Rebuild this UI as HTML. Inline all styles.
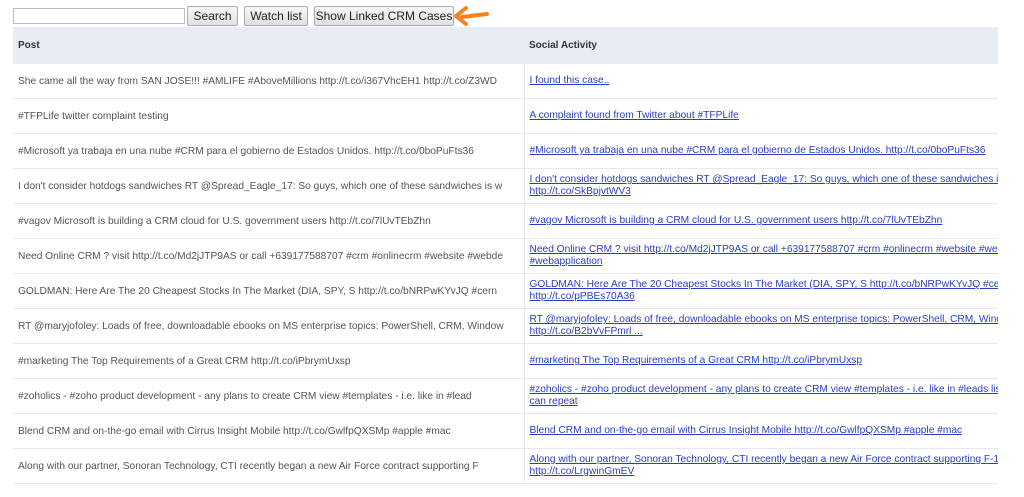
<!DOCTYPE html>
<html><head><style>
body{margin:0;background:#fff;font-family:"Liberation Sans",sans-serif;width:1024px;height:486px;overflow:hidden;position:relative}
.bar{position:absolute;top:6px;left:13px;height:20px}
input{position:absolute;left:0;top:2px;width:170px;height:14px;border:1px solid #bbb;padding:0;margin:0}
.btn{position:absolute;top:0;height:18px;border:1px solid #aaa;border-radius:2px;background:linear-gradient(#f8f8f8,#e0e0e0);font-size:12px;line-height:18px;text-align:center;color:#222}
.wrap{position:absolute;left:13px;top:27px;width:985px;height:470px;overflow:hidden}
table{border-collapse:collapse;table-layout:fixed;width:985px}
td,th{height:34px;border-bottom:1px solid #e4e9f2;padding:0 0 0 5px;font-size:10.2px;white-space:nowrap;overflow:hidden;vertical-align:middle;text-align:left}
th{background:#e8edf4;height:37px;font-weight:bold;color:#333;font-size:10px;border:none}
td:first-child{border-right:1px solid #e4e9f2;color:#555}
td a{color:#2a3ec4;text-decoration:underline;line-height:12px;display:block}
</style></head><body>
<div class="bar">
<input type="text">
<div class="btn" style="left:174px;width:49px">Search</div>
<div class="btn" style="left:231px;width:62px">Watch list</div>
<div class="btn" style="left:301px;width:138px">Show Linked CRM Cases</div>
</div>
<svg style="position:absolute;left:452px;top:5px" width="38" height="22" viewBox="0 0 38 22"><path d="M35 9 L10 12 M4 11 L14 3 M4 11 L14 19" stroke="#f58220" stroke-width="4" stroke-linecap="round" fill="none"/></svg>
<div class="wrap"><table>
<colgroup><col style="width:511px"><col style="width:474px"></colgroup>
<tr><th>Post</th><th>Social Activity</th></tr>
<tr><td>She came all the way from SAN JOSE!!! #AMLIFE #AboveMillions http://t.co/i367VhcEH1 http://t.co/Z3WD</td><td><a>I found this case..</a></td></tr>
<tr><td>#TFPLife twitter complaint testing</td><td><a>A complaint found from Twitter about #TFPLife</a></td></tr>
<tr><td>#Microsoft ya trabaja en una nube #CRM para el gobierno de Estados Unidos. http://t.co/0boPuFts36</td><td><a>#Microsoft ya trabaja en una nube #CRM para el gobierno de Estados Unidos. http://t.co/0boPuFts36</a></td></tr>
<tr><td>I don't consider hotdogs sandwiches RT @Spread_Eagle_17: So guys, which one of these sandwiches is w</td><td><a>I don't consider hotdogs sandwiches RT @Spread_Eagle_17: So guys, which one of these sandwiches is w<br>http://t.co/SkBpjvtWV3</a></td></tr>
<tr><td>#vagov Microsoft is building a CRM cloud for U.S. government users http://t.co/7lUvTEbZhn</td><td><a>#vagov Microsoft is building a CRM cloud for U.S. government users http://t.co/7lUvTEbZhn</a></td></tr>
<tr><td>Need Online CRM ? visit http://t.co/Md2jJTP9AS or call +639177588707 #crm #onlinecrm #website #webde</td><td><a>Need Online CRM ? visit http://t.co/Md2jJTP9AS or call +639177588707 #crm #onlinecrm #website #web<br>#webapplication</a></td></tr>
<tr><td>GOLDMAN: Here Are The 20 Cheapest Stocks In The Market (DIA, SPY, S http://t.co/bNRPwKYvJQ #cern</td><td><a>GOLDMAN: Here Are The 20 Cheapest Stocks In The Market (DIA, SPY, S http://t.co/bNRPwKYvJQ #cern :<br>http://t.co/pPBEs70A36</a></td></tr>
<tr><td>RT @maryjofoley: Loads of free, downloadable ebooks on MS enterprise topics: PowerShell, CRM, Window</td><td><a>RT @maryjofoley: Loads of free, downloadable ebooks on MS enterprise topics: PowerShell, CRM, Windo<br>http://t.co/B2bVvFPmrl ...</a></td></tr>
<tr><td>#marketing The Top Requirements of a Great CRM http://t.co/iPbrymUxsp</td><td><a>#marketing The Top Requirements of a Great CRM http://t.co/iPbrymUxsp</a></td></tr>
<tr><td>#zoholics - #zoho product development - any plans to create CRM view #templates - i.e. like in #lead</td><td><a>#zoholics - #zoho product development - any plans to create CRM view #templates - i.e. like in #leads lis<br>can repeat</a></td></tr>
<tr><td>Blend CRM and on-the-go email with Cirrus Insight Mobile http://t.co/GwlfpQXSMp #apple #mac</td><td><a>Blend CRM and on-the-go email with Cirrus Insight Mobile http://t.co/GwlfpQXSMp #apple #mac</a></td></tr>
<tr><td>Along with our partner, Sonoran Technology, CTI recently began a new Air Force contract supporting F</td><td><a>Along with our partner, Sonoran Technology, CTI recently began a new Air Force contract supporting F-1<br>http://t.co/LrgwinGmEV</a></td></tr>
</table></div>
</body></html>
